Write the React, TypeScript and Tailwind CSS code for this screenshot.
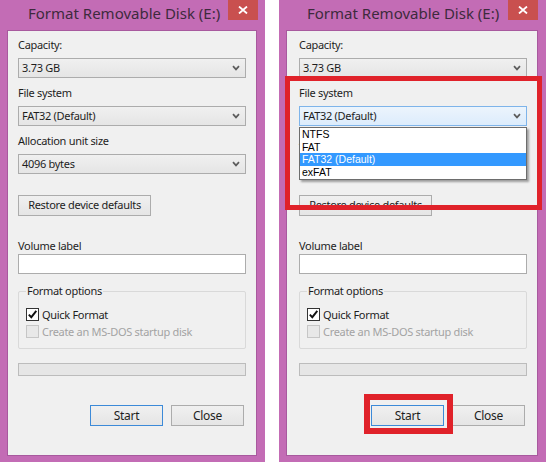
import React from 'react';

function Chevron() {
  return (
    <svg width="8" height="6" viewBox="0 0 8 6" className="shrink-0">
      <path d="M1 1.2 L4 4.4 L7 1.2" fill="none" stroke="#5c5c5c" strokeWidth="1.7" />
    </svg>
  );
}

function Select({ value, focused }: { value: string; focused?: boolean }) {
  return (
    <div
      className={`flex h-[20px] items-center justify-between border pl-[3px] pr-[5px] ${
        focused
          ? 'border-[#7eb4ea] bg-linear-to-b from-[#ecf4fc] to-[#dcecfc]'
          : 'border-[#acacac] bg-linear-to-b from-[#f0f0f0] to-[#e5e5e5]'
      }`}
    >
      <span>{value}</span>
      <Chevron />
    </div>
  );
}

function Label({ children }: { children: React.ReactNode }) {
  return <div className="h-[14px] leading-[14px]">{children}</div>;
}

function Check({ checked, disabled, label }: { checked?: boolean; disabled?: boolean; label: string }) {
  return (
    <div className={`flex h-[13px] items-center gap-[3px] ${disabled ? 'text-[#a3a3a3]' : ''}`}>
      <div
        className={`flex h-[13px] w-[13px] items-center justify-center border ${
          disabled ? 'border-[#c6c6c6] bg-[#e8e8e8]' : 'border-[#333333] bg-white'
        }`}
      >
        {checked && (
          <svg width="11" height="11" viewBox="0 0 11 11">
            <path d="M1.8 5.6 L4.3 8.2 L9.3 1.8" fill="none" stroke="#111" strokeWidth="1.9" />
          </svg>
        )}
      </div>
      <span className="leading-[13px]">{label}</span>
    </div>
  );
}

function Button({ children, primary, className = '' }: { children: React.ReactNode; primary?: boolean; className?: string }) {
  return (
    <div
      className={`flex h-[21px] items-center justify-center border bg-linear-to-b from-[#f0f0f0] to-[#e5e5e5] ${
        primary ? 'border-[#3c8ad8]' : 'border-[#acacac]'
      } ${className}`}
    >
      {children}
    </div>
  );
}

function FormatWindow({ wide, open }: { wide?: boolean; open?: boolean }) {
  return (
    <div className={`relative flex h-full flex-col bg-[#c36cb5] ${wide ? 'w-[267px]' : 'w-[265px]'}`}>
      <div className="flex h-[27px] items-center pl-[28px] text-[15px] text-[#3d2a3d]">Format Removable Disk (E:)</div>
      <div
        className={`absolute top-0 flex h-[20px] w-[30px] items-center justify-center bg-[#c9504f] ${
          wide ? 'left-[229px]' : 'left-[228px]'
        }`}
      >
        <svg width="10" height="8" viewBox="0 0 10 8">
          <path d="M1 0.5 L9 7.5 M9 0.5 L1 7.5" stroke="#fff" strokeWidth="1.8" />
        </svg>
      </div>

      {/* client area */}
      <div
        className={`mb-[6px] ml-[7px] mr-[8px] mt-[3px] flex flex-1 flex-col border border-[#a8599e] bg-[#f0f0f0] pr-[10px] pt-[7px] text-[11px] tracking-[-0.3px] text-[#1e1e1e] ${
          wide ? 'pl-[12px]' : 'pl-[10px]'
        }`}
      >
        <Label>Capacity:</Label>
        <div className="mt-[6px]">
          <Select value="3.73 GB" />
        </div>

        <div className="mt-[8px]">
          <Label>File system</Label>
        </div>
        <div className="relative mt-[6px]">
          <Select value="FAT32 (Default)" focused={open} />
          {open && (
            <div className="absolute left-0 top-[21px] z-10 w-full border border-[#6d6d6d] bg-white font-['Liberation_Sans',sans-serif] text-[10.5px] leading-[12.5px] tracking-normal text-black shadow-[2px_2px_2px_rgba(0,0,0,0.35)]">
              <div className="h-[12.5px] pl-[2px]">NTFS</div>
              <div className="h-[12.5px] pl-[2px]">FAT</div>
              <div className="flex h-[13px] items-center bg-[#3399ff] pl-[2px] text-white">FAT32 (Default)</div>
              <div className="h-[12.5px] pl-[2px]">exFAT</div>
            </div>
          )}
        </div>

        <div className="mt-[8px]">
          <Label>Allocation unit size</Label>
        </div>
        <div className="mt-[6px]">
          <Select value="4096 bytes" />
        </div>

        <Button className="mt-[21px] w-[133px]">Restore device defaults</Button>

        <div className="mt-[23px]">
          <Label>Volume label</Label>
        </div>
        <div className="mt-[1px] h-[20px] border border-[#acacac] bg-white" />

        {/* format options group */}
        <div className="relative mt-[17px] h-[58px] rounded-[2px] border border-[#d9d9d9] pl-[7px] pt-[16px]">
          <span className="absolute -top-[8px] left-[7px] bg-[#f0f0f0] px-[1px] leading-[14px]">Format options</span>
          <Check checked label="Quick Format" />
          <div className="mt-[4px]">
            <Check disabled label="Create an MS-DOS startup disk" />
          </div>
        </div>

        <div className="mt-[14px] h-[13px] border border-[#bcbcbc] bg-[#e6e6e6]" />

        <div className="mt-[29px] flex justify-end gap-[8px] pr-[2px]">
          <Button primary className="w-[73px] text-[12px]">
            Start
          </Button>
          <Button className="w-[73px] text-[12px]">Close</Button>
        </div>
      </div>
    </div>
  );
}

export default function App() {
  return (
    <div className="relative flex h-[462px] w-[546px] justify-between overflow-hidden bg-white font-['Noto_Sans',sans-serif]">
      <FormatWindow />
      <FormatWindow wide open />
      <div className="pointer-events-none absolute left-[285px] top-[76px] z-20 h-[134px] w-[257px] border-[5px] border-[#e0222a]" />
      <div className="pointer-events-none absolute left-[364px] top-[394px] z-20 h-[40px] w-[89px] border-[6px] border-[#e0222a]" />
    </div>
  );
}
